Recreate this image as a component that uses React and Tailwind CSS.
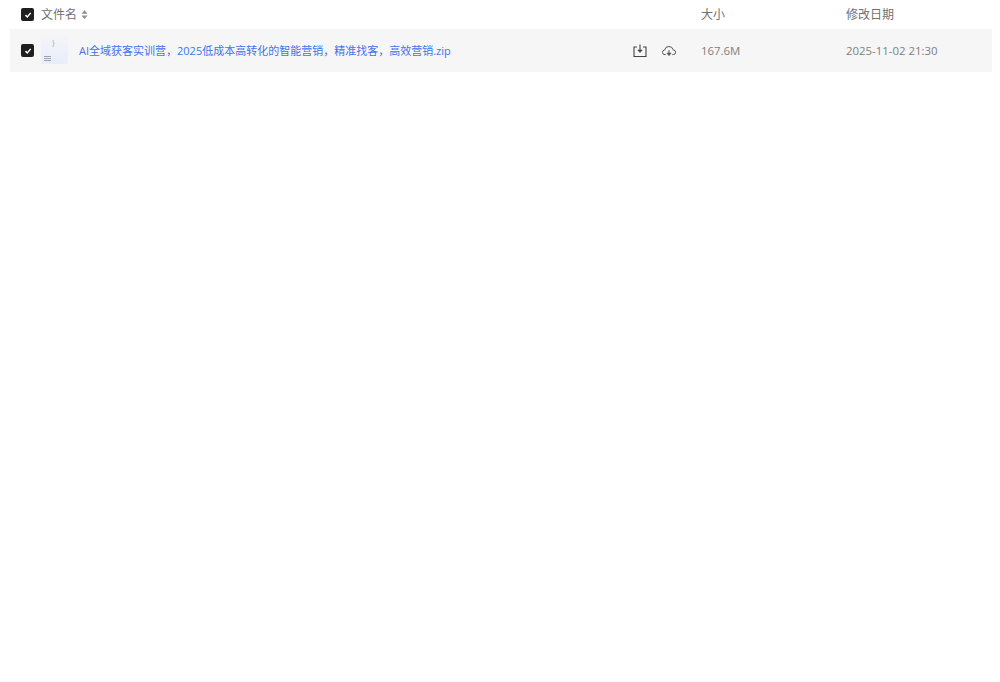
import React from "react";

const FONT = '"Open Sans", "Noto Sans CJK SC", sans-serif';

/* ---------- icons ---------- */
function Check() {
  return (
    <span className="w-[13px] h-[13px] rounded-[2px] bg-[#1f1f1f] flex items-center justify-center shrink-0">
      <svg viewBox="0 0 12 12" className="w-[8px] h-[8px]" fill="none" stroke="#fff" strokeWidth="2.2">
        <path d="M2.2 6.2 5 9 10 2.8" />
      </svg>
    </span>
  );
}

function SortIcon() {
  return (
    <svg viewBox="0 0 8 10" className="w-[7px] h-[9px] ml-[4px]" fill="#8f8f8f">
      <path d="M4 0 7.5 4H.5z" />
      <path d="M4 10 .5 6h7z" />
    </svg>
  );
}

function SaveIcon() {
  return (
    <svg viewBox="0 0 14 14" className="w-[14px] h-[14px]" fill="none" stroke="#444" strokeWidth="1.1">
      <path d="M4 3H1v9.5h12V3h-3" />
      <path d="M7 .5v6" />
      <path d="M4.8 6 7 8.6 9.2 6z" fill="#444" strokeWidth="0.6" />
    </svg>
  );
}

function CloudIcon() {
  return (
    <svg viewBox="0 0 14 12" className="w-[14px] h-[12px]" fill="none" stroke="#555" strokeWidth="1">
      <path d="M3.8 9.6H3a2.3 2.3 0 0 1-.4-4.6 4.4 4.4 0 0 1 8.6-.1 2.35 2.35 0 0 1 .1 4.7h-1" />
      <path d="M7 5.2v3.4" />
      <path d="M4.8 8 7 10.8 9.2 8z" fill="#555" strokeWidth="0.5" />
    </svg>
  );
}

function ZipThumb() {
  return (
    <div className="w-[27px] h-[27px] bg-gradient-to-b from-[#f3f5fb] to-[#e9edf7] rounded-[2px] flex flex-col justify-between items-start shrink-0 pl-[3px]">
      <span className="text-[7px] leading-[9px] text-[#9aa3c0] ml-[8px] mt-[1px]">{"}"}</span>
      <span className="flex flex-col gap-[1px] w-[7px] mb-[3px]">
        <span className="h-[1px] bg-[#9aa2b8]" />
        <span className="h-[1px] bg-[#9aa2b8]" />
        <span className="h-[1px] bg-[#9aa2b8]" />
      </span>
    </div>
  );
}

export default function App() {
  return (
    <div className="w-[1000px] h-[682px] bg-white pl-[10px] pr-[8px]" style={{ fontFamily: FONT }}>
      {/* Header */}
      <div className="h-[29px] flex items-center pl-[11px] text-[#707070] text-[12px]">
        <Check />
        <span className="ml-[7px]">文件名</span>
        <SortIcon />
        <span className="ml-auto w-[145px]">大小</span>
        <span className="w-[146px]">修改日期</span>
      </div>

      {/* File row */}
      <div className="h-[43px] flex items-center bg-[#f6f6f6] pl-[11px] text-[11.4px]">
        <Check />
        <span className="ml-[7px]">
          <ZipThumb />
        </span>
        <a className="ml-[11px] mt-[2px] text-[11px] text-[#4273ee] whitespace-nowrap">
          AI全域获客实训营，2025低成本高转化的智能营销，精准找客，高效营销.zip
        </a>
        <div className="ml-auto flex items-center gap-[15px] mr-[25px]">
          <SaveIcon />
          <CloudIcon />
        </div>
        <span className="w-[145px] text-[#808080]">167.6M</span>
        <span className="w-[146px] text-[#808080]">2025-11-02 21:30</span>
      </div>
    </div>
  );
}
